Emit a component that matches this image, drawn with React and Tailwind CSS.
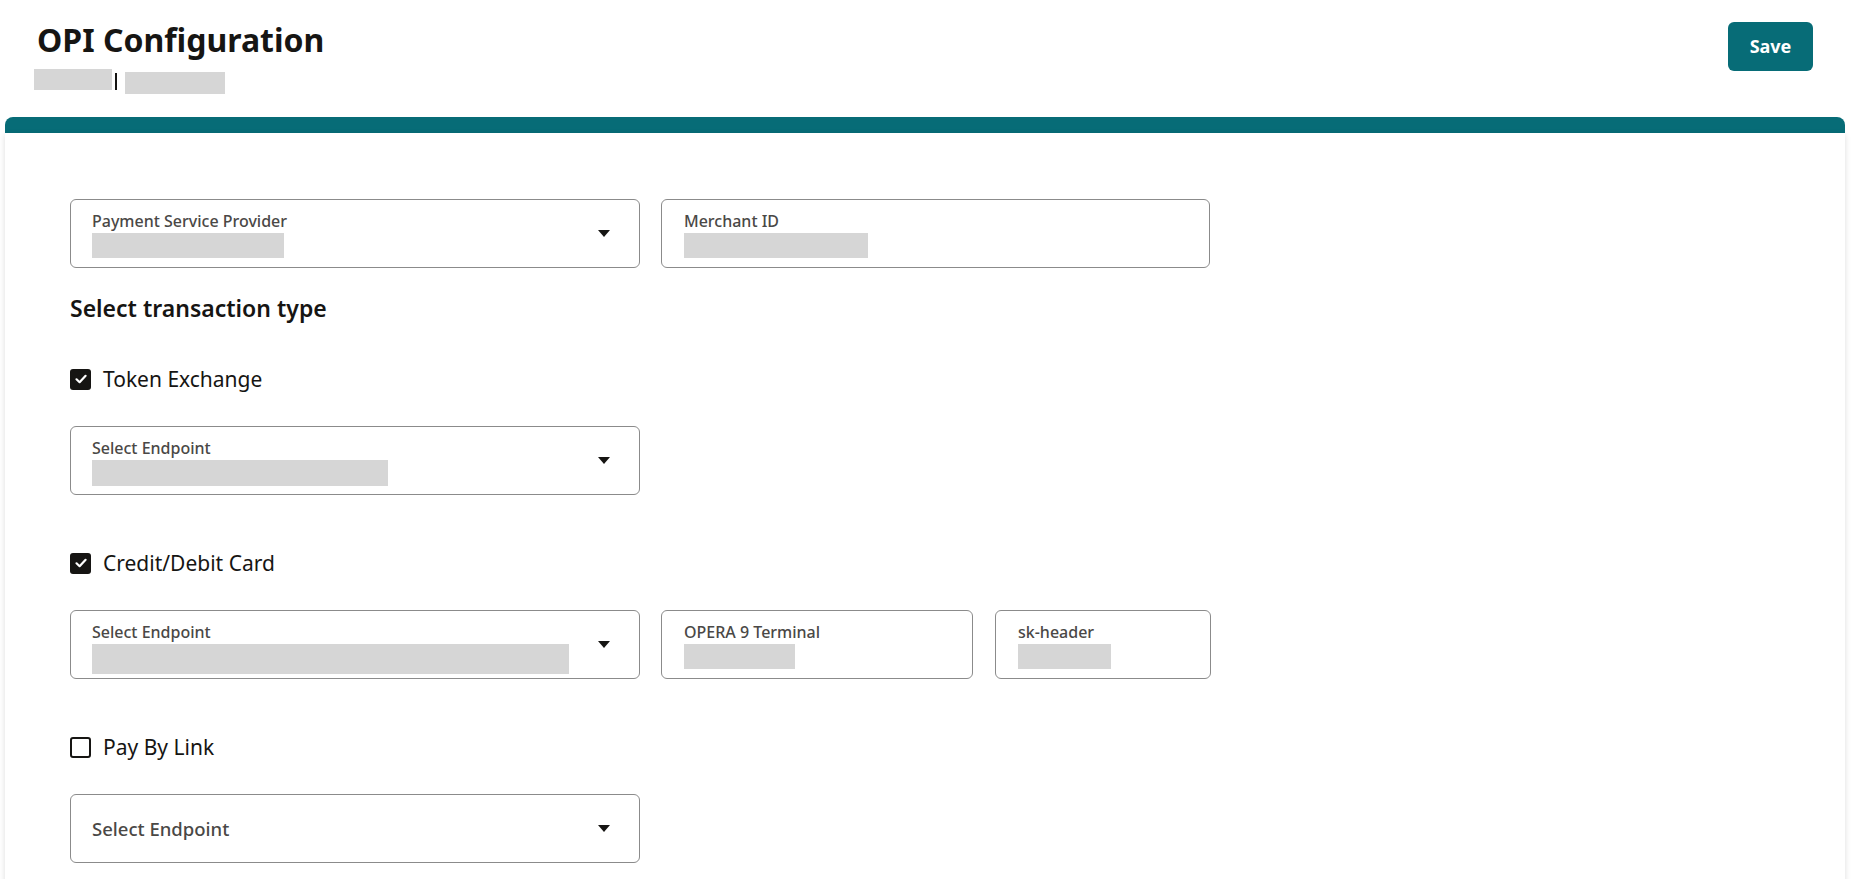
import React, { useState } from "react";

const TEAL = "bg-[#076c77]";

// grey block standing in for a masked value
const Masked = ({ w, h = "h-[25px]" }) => (
  <div className={`${w} ${h} bg-[#d6d6d6]`} />
);

const Caret = () => (
  <svg width="12" height="7" viewBox="0 0 12 7" className="shrink-0">
    <path d="M0 0 H12 L6 7 Z" fill="#161513" />
  </svg>
);

const SelectField = ({ width, label, masked, maskedH }) => (
  <div
    className={`${width} flex h-[69px] items-center justify-between rounded-[6px] border border-[#8b8b8b] pl-[21px] pr-[29px]`}
  >
    {masked ? (
      <div className="flex h-full flex-col pt-[11px]">
        <span className="text-[16px] font-medium leading-[20px] text-[#4a4846]">
          {label}
        </span>
        <div className="mt-[2px]">
          <Masked w={masked} h={maskedH} />
        </div>
      </div>
    ) : (
      <span className="text-[18.5px] font-medium leading-[24px] text-[#4a4846]">
        {label}
      </span>
    )}
    <Caret />
  </div>
);

const TextField = ({ width, label, masked }) => (
  <div
    className={`${width} flex h-[69px] flex-col rounded-[6px] border border-[#8b8b8b] pl-[22px] pt-[11px]`}
  >
    <span className="text-[16px] font-medium leading-[20px] text-[#4a4846]">
      {label}
    </span>
    <div className="mt-[2px]">
      <Masked w={masked} />
    </div>
  </div>
);

const Checkbox = ({ checked, onChange, label }) => (
  <label className="flex h-[24px] cursor-pointer items-center gap-[12px]">
    <input
      type="checkbox"
      className="hidden"
      checked={checked}
      onChange={(e) => onChange(e.target.checked)}
    />
    {checked ? (
      <span className="flex h-[21px] w-[21px] items-center justify-center rounded-[3px] bg-[#161513]">
        <svg width="14" height="14" viewBox="0 0 14 14">
          <path
            d="M2.5 7.3 L5.6 10.2 L11.6 3.8"
            fill="none"
            stroke="#fff"
            strokeWidth="2.2"
            strokeLinecap="round"
            strokeLinejoin="round"
          />
        </svg>
      </span>
    ) : (
      <span className="h-[21px] w-[21px] rounded-[3px] border-2 border-[#161513] bg-white" />
    )}
    <span className="text-[21px] leading-[24px] text-[#161513]">{label}</span>
  </label>
);

export default function App() {
  const [types, setTypes] = useState({ token: true, card: true, link: false });
  const toggle = (key) => (val) => setTypes((prev) => ({ ...prev, [key]: val }));

  return (
    <div className="min-h-screen bg-white font-['Noto_Sans',sans-serif] text-[#161513]">
      {/* Page header */}
      <header className="flex h-[117px] items-start justify-between pl-[34px] pr-[45px]">
        <div className="pt-[20px]">
          <h1 className="pl-[3px] text-[32px] font-bold leading-[40px]">
            OPI Configuration
          </h1>
          <div className="mt-[9px] flex items-start">
            <div className="h-[21px] w-[78px] bg-[#d6d6d6]" />
            <div className="ml-[3px] mt-[4px] h-[17px] w-[2px] bg-[#161513]" />
            <div className="ml-[8px] mt-[3px] h-[22px] w-[100px] bg-[#d6d6d6]" />
          </div>
        </div>
        <button
          className={`mt-[22px] h-[49px] w-[85px] rounded-[6px] ${TEAL} text-[18px] font-bold text-white`}
        >
          Save
        </button>
      </header>

      {/* Config card */}
      <main className="ml-[5px] mr-[13px]">
        <div className={`h-[16px] rounded-t-[8px] ${TEAL}`} />
        <div className="bg-white pb-[60px] pl-[65px] pt-[66px] shadow-[0_2px_6px_rgba(0,0,0,0.14)]">
          <div className="flex gap-[21px]">
            <SelectField
              width="w-[570px]"
              label="Payment Service Provider"
              masked="w-[192px]"
            />
            <TextField width="w-[549px]" label="Merchant ID" masked="w-[184px]" />
          </div>

          <h2 className="mt-[25px] text-[23px] font-semibold leading-[30px]">
            Select transaction type
          </h2>

          {/* Token exchange */}
          <div className="mt-[44px]">
            <Checkbox
              checked={types.token}
              onChange={toggle("token")}
              label="Token Exchange"
            />
            <div className="mt-[35px]">
              <SelectField
                width="w-[570px]"
                label="Select Endpoint"
                masked="w-[296px]"
                maskedH="h-[26px]"
              />
            </div>
          </div>

          {/* Card payments */}
          <div className="mt-[56px]">
            <Checkbox
              checked={types.card}
              onChange={toggle("card")}
              label="Credit/Debit Card"
            />
            <div className="mt-[35px] flex gap-[21px]">
              <SelectField
                width="w-[570px]"
                label="Select Endpoint"
                masked="w-[477px]"
                maskedH="h-[30px]"
              />
              <TextField
                width="w-[312px]"
                label="OPERA 9 Terminal"
                masked="w-[111px]"
              />
              <div className="ml-[1px]">
                <TextField width="w-[216px]" label="sk-header" masked="w-[93px]" />
              </div>
            </div>
          </div>

          {/* Pay by link */}
          <div className="mt-[56px]">
            <Checkbox
              checked={types.link}
              onChange={toggle("link")}
              label="Pay By Link"
            />
            <div className="mt-[35px]">
              <SelectField width="w-[570px]" label="Select Endpoint" />
            </div>
          </div>
        </div>
      </main>
    </div>
  );
}
